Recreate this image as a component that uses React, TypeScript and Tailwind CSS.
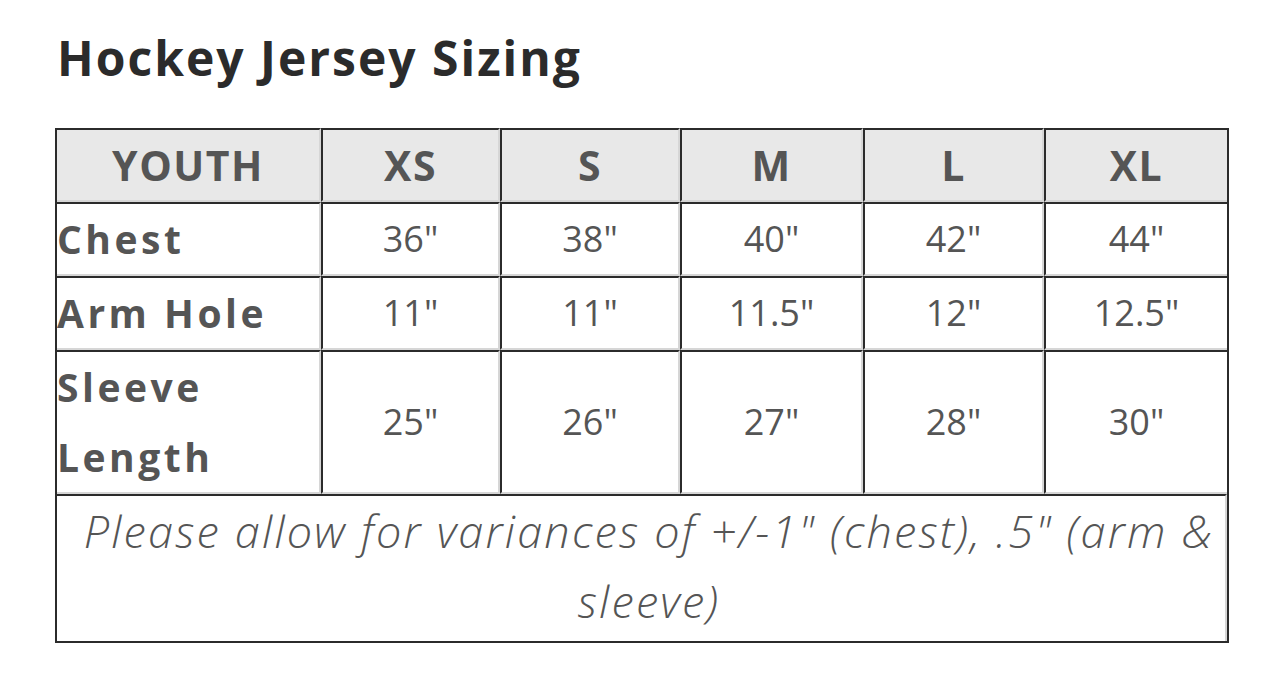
const sizes = ["XS", "S", "M", "L", "XL"];
const widths = ["w-[264px]", "w-[179px]", "w-[180px]", "w-[183px]", "w-[181px]", "w-[183px]"];

const rows = [
  { label: "Chest", values: ['36"', '38"', '40"', '42"', '44"'] },
  { label: "Arm Hole", values: ['11"', '11"', '11.5"', '12"', '12.5"'] },
  { label: "Sleeve Length", values: ['25"', '26"', '27"', '28"', '30"'] },
];

// inset-style cell borders: dark top/left, light bottom/right
function cellBorder(col: number, lastRow: boolean) {
  return [
    "border-t-2 border-t-[#2b2b2b]",
    col > 0 ? "border-l-2 border-l-[#2b2b2b]" : "",
    col < 5 ? "border-r-2 border-r-[#d6d6d6]" : "",
    lastRow ? "" : "border-b-2 border-b-[#d6d6d6]",
  ].join(" ");
}

export default function App() {
  return (
    <div className="min-h-screen bg-white px-[55px] pt-[29px] font-['Open_Sans',sans-serif] text-[#555]">
      <h1 className="text-[48px] font-bold leading-[58px] text-[#2b2b2b] pl-[2px] tracking-[2px]">Hockey Jersey Sizing</h1>

      <table className="mt-[41px] w-[1174px] table-fixed border-separate border-spacing-0 border-l-2 border-r-2 border-b-2 border-[#2b2b2b]">
        <thead>
          <tr className="bg-[#e8e8e8]">
            <th className={`${widths[0]} ${cellBorder(0, false)} text-center text-[41px] font-bold leading-[70px] tracking-[1.5px]`}>YOUTH</th>
            {sizes.map((s, i) => (
              <th key={s} className={`${widths[i + 1]} ${cellBorder(i + 1, false)} text-center text-[41px] font-bold leading-[70px] tracking-[1.5px]`}>
                {s}
              </th>
            ))}
          </tr>
        </thead>
        <tbody>
          {rows.map((row) => (
            <tr key={row.label}>
              <td className={`${cellBorder(0, false)} text-left text-[39px] font-bold leading-[70px] tracking-[3.5px] align-middle pr-[40px]`}>
                {row.label}
              </td>
              {row.values.map((v, i) => (
                <td key={i} className={`${cellBorder(i + 1, false)} text-center text-[36px] font-normal leading-[70px] align-middle`}>
                  {v}
                </td>
              ))}
            </tr>
          ))}
          <tr>
            <td colSpan={6} className={`${cellBorder(0, true)} text-center text-[45px] italic font-light leading-[70px] tracking-[2.2px] pl-[20px] pr-[4px] pb-[5px]`}>
              Please allow for variances of +/-1" (chest), .5" (arm &amp; sleeve)
            </td>
          </tr>
        </tbody>
      </table>
    </div>
  );
}
